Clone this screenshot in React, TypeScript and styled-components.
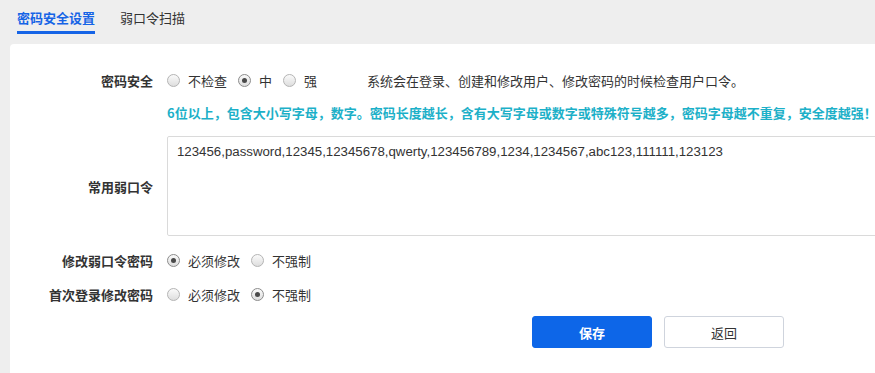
import React, { useState } from "react";
import styled, { createGlobalStyle, css } from "styled-components";

const GlobalStyle = createGlobalStyle`
  html, body {
    margin: 0;
    padding: 0;
    background: #eeeeee;
    overflow: hidden;
  }
  body {
    font-family: "Noto Sans CJK SC", "Noto Sans", sans-serif;
    font-size: 13px;
    color: #333;
  }
`;

const Page = styled.div`
  width: 875px;
  height: 373px;
  display: flex;
  flex-direction: column;
  overflow: hidden;
`;

const TabBar = styled.div`
  height: 44px;
  display: flex;
  align-items: flex-start;
  gap: 25px;
  padding-left: 17px;
  box-sizing: border-box;
`;

const Tab = styled.div<{ $active?: boolean }>`
  height: 34px;
  box-sizing: border-box;
  padding-top: 8px;
  line-height: 20px;
  font-size: 13px;
  color: #333;
  border-bottom: 3px solid transparent;
  cursor: pointer;
  ${(p) =>
    p.$active &&
    css`
      color: #1664e6;
      font-weight: 700;
      border-bottom-color: #1664e6;
    `}
`;

const Card = styled.div`
  flex: 1;
  margin-left: 10px;
  background: #fff;
  border-radius: 4px 0 0 0;
  overflow: hidden;
  padding-top: 20px;
  box-sizing: border-box;
`;

const Form = styled.div`
  display: grid;
  grid-template-columns: 143px 1fr;
  column-gap: 14px;
  align-items: center;
`;

const Label = styled.div<{ $mt?: number }>`
  text-align: right;
  font-weight: 700;
  color: #333;
  white-space: nowrap;
  margin-top: ${(p) => (p.$mt ? `${p.$mt}px` : "0")};
`;

const Field = styled.div<{ $h?: number; $mt?: number }>`
  display: flex;
  align-items: center;
  white-space: nowrap;
  height: ${(p) => (p.$h ? `${p.$h}px` : "auto")};
  margin-top: ${(p) => (p.$mt ? `${p.$mt}px` : "0")};
`;

const Hint = styled.div`
  height: 34px;
  line-height: 34px;
  width: max-content;
  color: #1cb0c8;
  font-weight: 700;
  white-space: nowrap;
`;

const Option = styled.label`
  display: inline-flex;
  align-items: center;
  gap: 8px;
  margin-right: 11px;
  cursor: pointer;
  color: #333;
`;

const RadioDot = styled.span<{ $checked?: boolean }>`
  width: 13px;
  height: 13px;
  box-sizing: border-box;
  border-radius: 50%;
  border: 1px solid ${(p) => (p.$checked ? "#8c8c8c" : "#b4b4b4")};
  background: linear-gradient(#fafafa, #dedede);
  display: inline-flex;
  align-items: center;
  justify-content: center;
  &::after {
    content: "";
    width: 5px;
    height: 5px;
    border-radius: 50%;
    background: ${(p) => (p.$checked ? "#4a4a4a" : "transparent")};
  }
`;

const Desc = styled.span`
  margin-left: 39px;
  color: #333;
`;

const TextArea = styled.textarea`
  width: 760px;
  height: 100px;
  box-sizing: border-box;
  border: 1px solid #dadada;
  border-radius: 2px;
  padding: 6px 9px;
  font-family: "Liberation Sans", Arial, sans-serif;
  font-size: 13.25px;
  line-height: 18px;
  color: #333;
  resize: none;
  outline: none;
`;

const Buttons = styled.div`
  grid-column: 2;
  display: flex;
  gap: 12px;
  padding-left: 365px;
  margin-top: 5px;
`;

const Button = styled.button<{ $primary?: boolean }>`
  width: 120px;
  height: 32px;
  box-sizing: border-box;
  border-radius: 3px;
  font-family: "Noto Sans CJK SC", sans-serif;
  font-size: 13px;
  cursor: pointer;
  ${(p) =>
    p.$primary
      ? css`
          background: #0d66e8;
          border: 1px solid #0d66e8;
          color: #fff;
          font-weight: 700;
        `
      : css`
          background: #fff;
          border: 1px solid #cfd4dd;
          color: #333;
        `}
`;

function Radio({
  options,
  value,
  onChange,
}: {
  options: string[];
  value: string;
  onChange: (v: string) => void;
}) {
  return (
    <>
      {options.map((o) => (
        <Option key={o} onClick={() => onChange(o)}>
          <RadioDot $checked={o === value} />
          {o}
        </Option>
      ))}
    </>
  );
}

export default function App() {
  const [level, setLevel] = useState("中");
  const [weak, setWeak] = useState("必须修改");
  const [first, setFirst] = useState("不强制");
  const [tab, setTab] = useState(0);
  const [text, setText] = useState(
    "123456,password,12345,12345678,qwerty,123456789,1234,1234567,abc123,111111,123123"
  );

  return (
    <Page>
      <GlobalStyle />
      <TabBar>
        <Tab $active={tab === 0} onClick={() => setTab(0)}>密码安全设置</Tab>
        <Tab $active={tab === 1} onClick={() => setTab(1)}>弱口令扫描</Tab>
      </TabBar>
      <Card>
        <Form>
          <Label>密码安全</Label>
          <Field $h={32}>
            <Radio options={["不检查", "中", "强"]} value={level} onChange={setLevel} />
            <Desc>系统会在登录、创建和修改用户、修改密码的时候检查用户口令。</Desc>
          </Field>

          <div />
          <Hint>6位以上，包含大小写字母，数字。密码长度越长，含有大写字母或数字或特殊符号越多，密码字母越不重复，安全度越强！</Hint>

          <Label $mt={6}>常用弱口令</Label>
          <Field $mt={6}>
            <TextArea value={text} onChange={(e) => setText(e.target.value)} />
          </Field>

          <Label $mt={7}>修改弱口令密码</Label>
          <Field $h={34} $mt={7}>
            <Radio options={["必须修改", "不强制"]} value={weak} onChange={setWeak} />
          </Field>

          <Label>首次登录修改密码</Label>
          <Field $h={34}>
            <Radio options={["必须修改", "不强制"]} value={first} onChange={setFirst} />
          </Field>

          <Buttons>
            <Button $primary>保存</Button>
            <Button>返回</Button>
          </Buttons>
        </Form>
      </Card>
    </Page>
  );
}
